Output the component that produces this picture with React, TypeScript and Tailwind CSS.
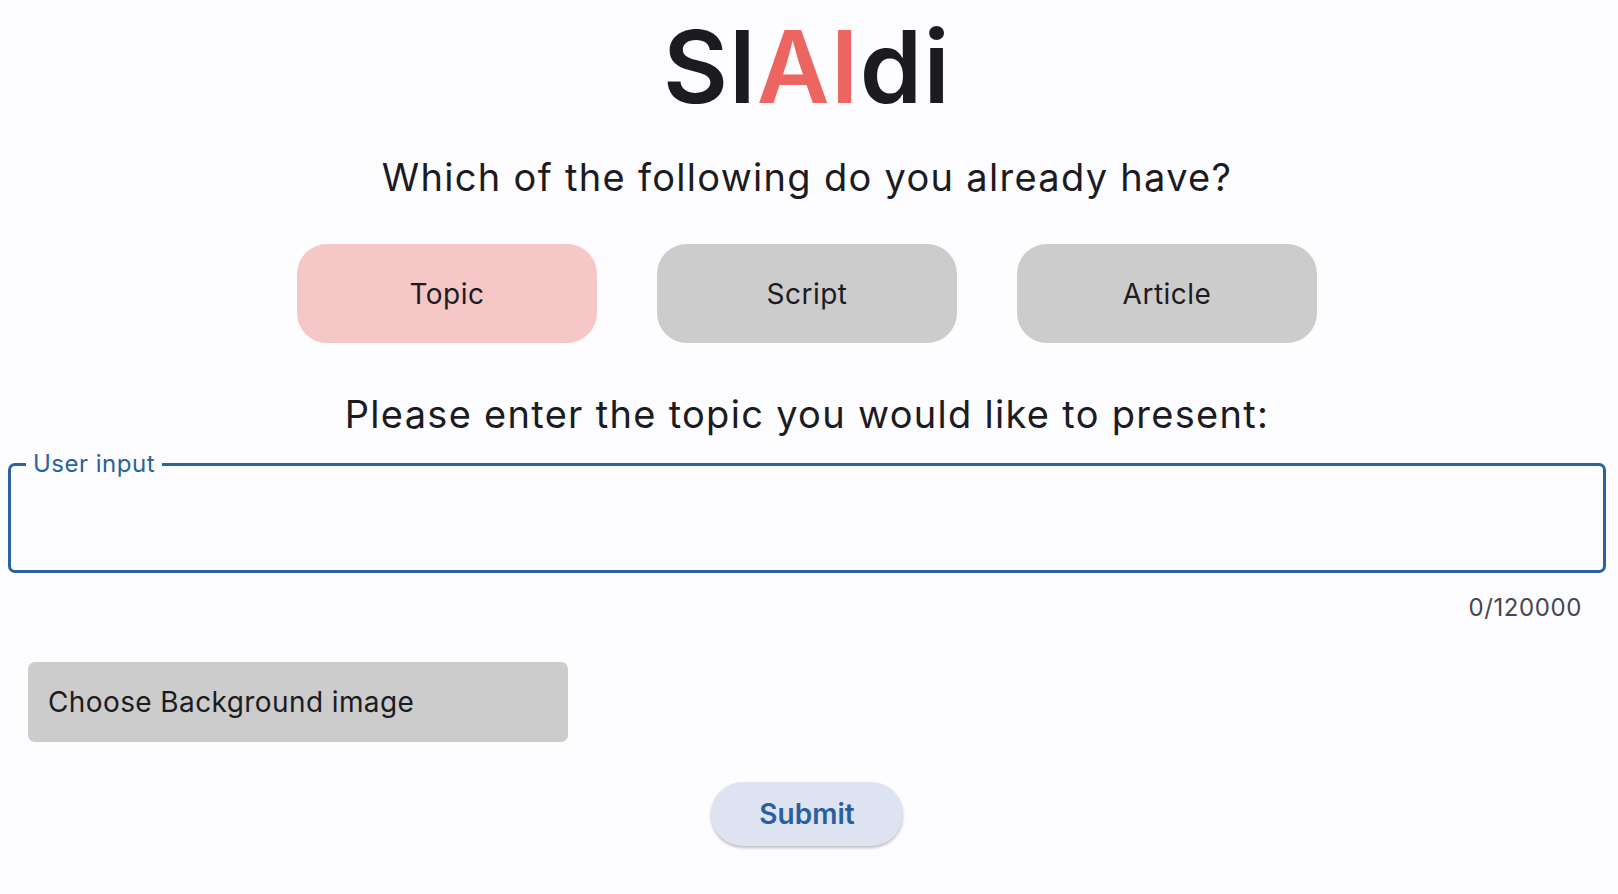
import { useState } from "react";

const options = ["Topic", "Script", "Article"];

export default function App() {
  const [selected, setSelected] = useState("Topic");
  const [text, setText] = useState("");

  return (
    <div className="min-h-screen bg-[#fdfcff] text-[#1c1b1f] font-['Inter',sans-serif] pt-[17px] pr-1 pb-10">
      <h1 className="text-center text-[100px] leading-none font-[560] tracking-[1.3px]">
        Sl<span className="text-[#ec6561]">AI</span>di
      </h1>

      <p className="mt-[38px] text-center text-[38px] leading-[44px] tracking-[1.3px]">Which of the following do you already have?</p>

      <div className="mt-[45px] flex justify-center gap-[60px]">
        {options.map((o) => (
          <button
            key={o}
            onClick={() => setSelected(o)}
            className={`w-[300px] h-[99px] rounded-[30px] text-[28px] tracking-[0.5px] ${selected === o ? "bg-[#f5c8c7]" : "bg-[#cccccc]"}`}
          >
            {o}
          </button>
        ))}
      </div>

      <p className="mt-[49px] text-center text-[38px] leading-[44px] tracking-[1.3px]">
        Please enter the {selected.toLowerCase()} you would like to present:
      </p>

      <div className="mt-[28px] mx-2">
        <fieldset className="h-[122px] border-[3px] border-[#2a62a0] rounded-[7px] px-[15px] -mt-[13px] pt-0">
          <legend className="px-[7px] text-[24px] leading-[26px] tracking-[0.5px] text-[#2a62a0]">User input</legend>
          <textarea
            value={text}
            onChange={(e) => setText(e.target.value)}
            className="w-full h-[80px] bg-transparent outline-none resize-none text-[24px]"
          />
        </fieldset>
        <div className="mt-[19px] pr-[24px] text-right text-[24px] leading-[32px] tracking-[0.6px] text-[#46464f]">
          {text.length}/120000
        </div>
      </div>

      <div className="mt-[38px] pl-[28px]">
        <button className="w-[540px] h-[80px] rounded-[7px] bg-[#cccccc] text-left pl-[20px] text-[28px] tracking-[0.4px]">
          Choose Background image
        </button>
      </div>

      <div className="mt-[40px] flex justify-center">
        <button className="w-[192px] h-[64px] rounded-full bg-[#dee3f1] text-[#2a5f9e] text-[28px] font-semibold shadow-[0_2px_3px_rgba(0,0,0,0.25)]">
          Submit
        </button>
      </div>
    </div>
  );
}
